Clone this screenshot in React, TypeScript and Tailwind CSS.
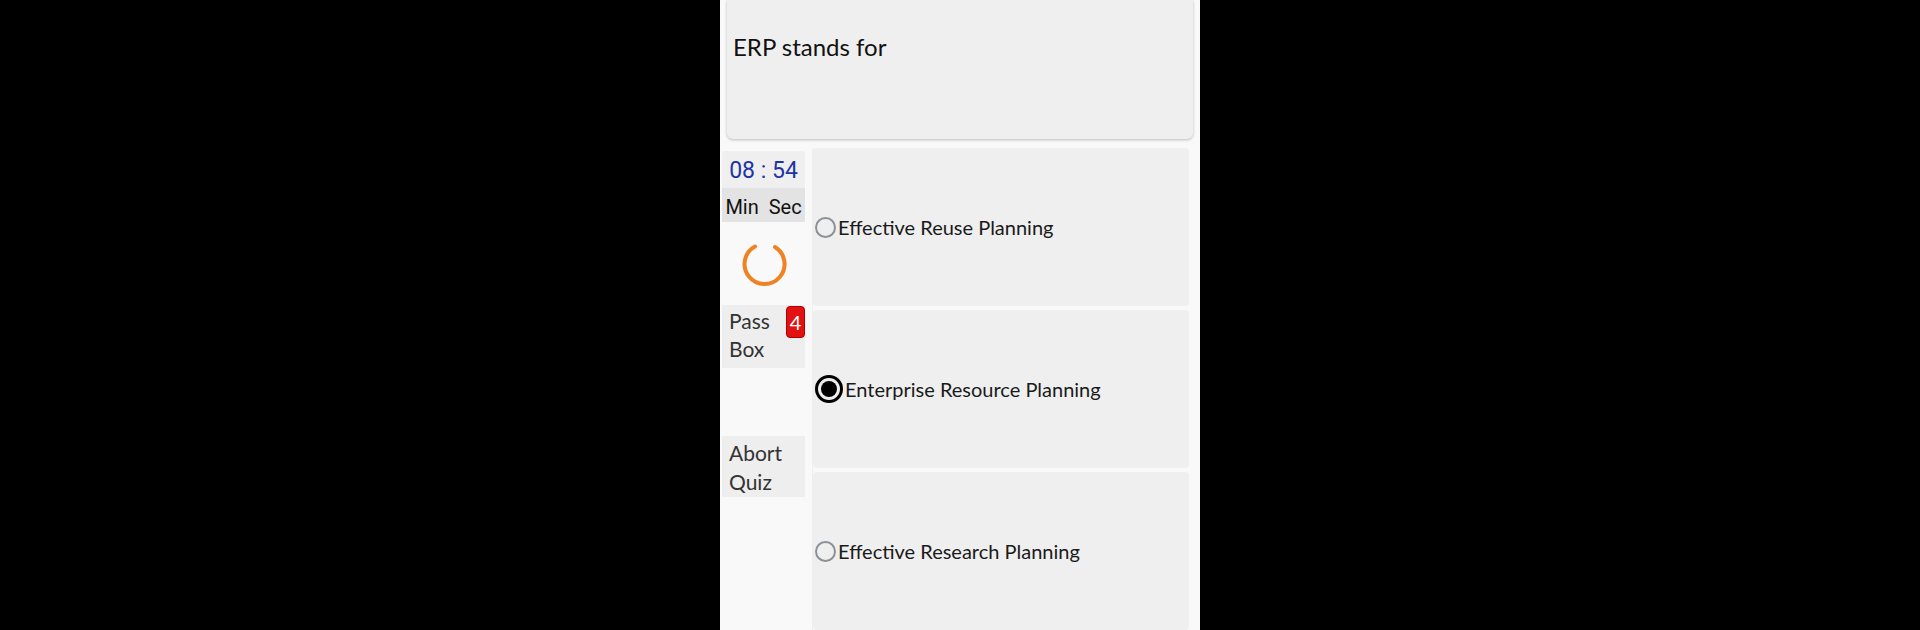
import React from "react";

function Radio({ selected }: { selected?: boolean }) {
  if (selected) {
    return (
      <span className="flex h-[28px] w-[28px] shrink-0 items-center justify-center rounded-full border-[3px] border-black">
        <span className="h-[16px] w-[16px] rounded-full bg-black" />
      </span>
    );
  }
  return <span className="h-[21px] w-[21px] shrink-0 rounded-full border-[2.5px] border-[#8b9196]" />;
}

function Option({ text, selected }: { text: string; selected?: boolean }) {
  return (
    <div className="flex h-[158px] shrink-0 items-center rounded-[4px] bg-[#efefef] pl-[2px]">
      <Radio selected={selected} />
      <span className="ml-[2px] text-[20px] text-[#1a1a1a]">{text}</span>
    </div>
  );
}

export default function App() {
  return (
    <div className="flex h-[630px] w-full justify-center overflow-hidden bg-black" style={{ fontFamily: "Lato, 'Open Sans', sans-serif" }}>
      <div className="flex h-[630px] w-[480px] flex-col bg-[#f9f9f9]">
        <div className="mx-[7px] flex h-[139px] shrink-0 items-center rounded-b-[6px] bg-[#efefef] pb-[46px] pl-[6px] shadow-[0_1px_3px_rgba(0,0,0,0.25)]">
          <span className="text-[24px] text-[#111]">ERP stands for</span>
        </div>
        <div className="mt-[9px] flex min-h-0 flex-1">
          <div className="flex w-[93px] shrink-0 flex-col items-stretch border-r border-[#eeeeee] pl-[2px] pr-[7px] pt-[3px]">
            <div className="flex flex-col rounded-[3px]" style={{ fontFamily: "Roboto, sans-serif" }}>
              <div className="flex h-[37px] items-center justify-center rounded-t-[3px] bg-[#efefef] pt-[3px] text-[23px] text-[#1c35a3]">08 : 54</div>
              <div className="flex h-[34px] items-center justify-center bg-[#e3e3e3] pt-[3px] text-[20px] text-[#111]">Min&nbsp;&nbsp;Sec</div>
            </div>
            <div className="flex h-[83px] items-center justify-center">
              <svg width="48" height="48" viewBox="0 0 48 48">
                <path d="M 15 6.5 A 20 20 0 1 0 35 7" fill="none" stroke="#ef8222" strokeWidth="4" strokeLinecap="round" />
              </svg>
            </div>
            <div className="relative h-[63px] bg-[#eeeeee] pl-[7px] pt-[1px] text-[21px] leading-[29px] text-[#333]">
              <div>Pass</div>
              <div className="-mt-[1px]">Box</div>
              <span className="absolute right-0 top-[1px] flex h-[32px] w-[19px] items-center justify-center rounded-[4px] border border-[#b00000] bg-[#e31212] text-[20px] text-white">4</span>
            </div>
            <div className="mt-[68px] h-[61px] bg-[#eeeeee] pl-[7px] pt-[2px] text-[21px] leading-[29px] text-[#333]">
              <div>Abort</div>
              <div>Quiz</div>
            </div>
          </div>
          <div className="flex flex-1 flex-col gap-[4px] pr-[11px]">
            <Option text="Effective Reuse Planning" />
            <Option text="Enterprise Resource Planning" selected />
            <Option text="Effective Research Planning" />
          </div>
        </div>
      </div>
    </div>
  );
}
